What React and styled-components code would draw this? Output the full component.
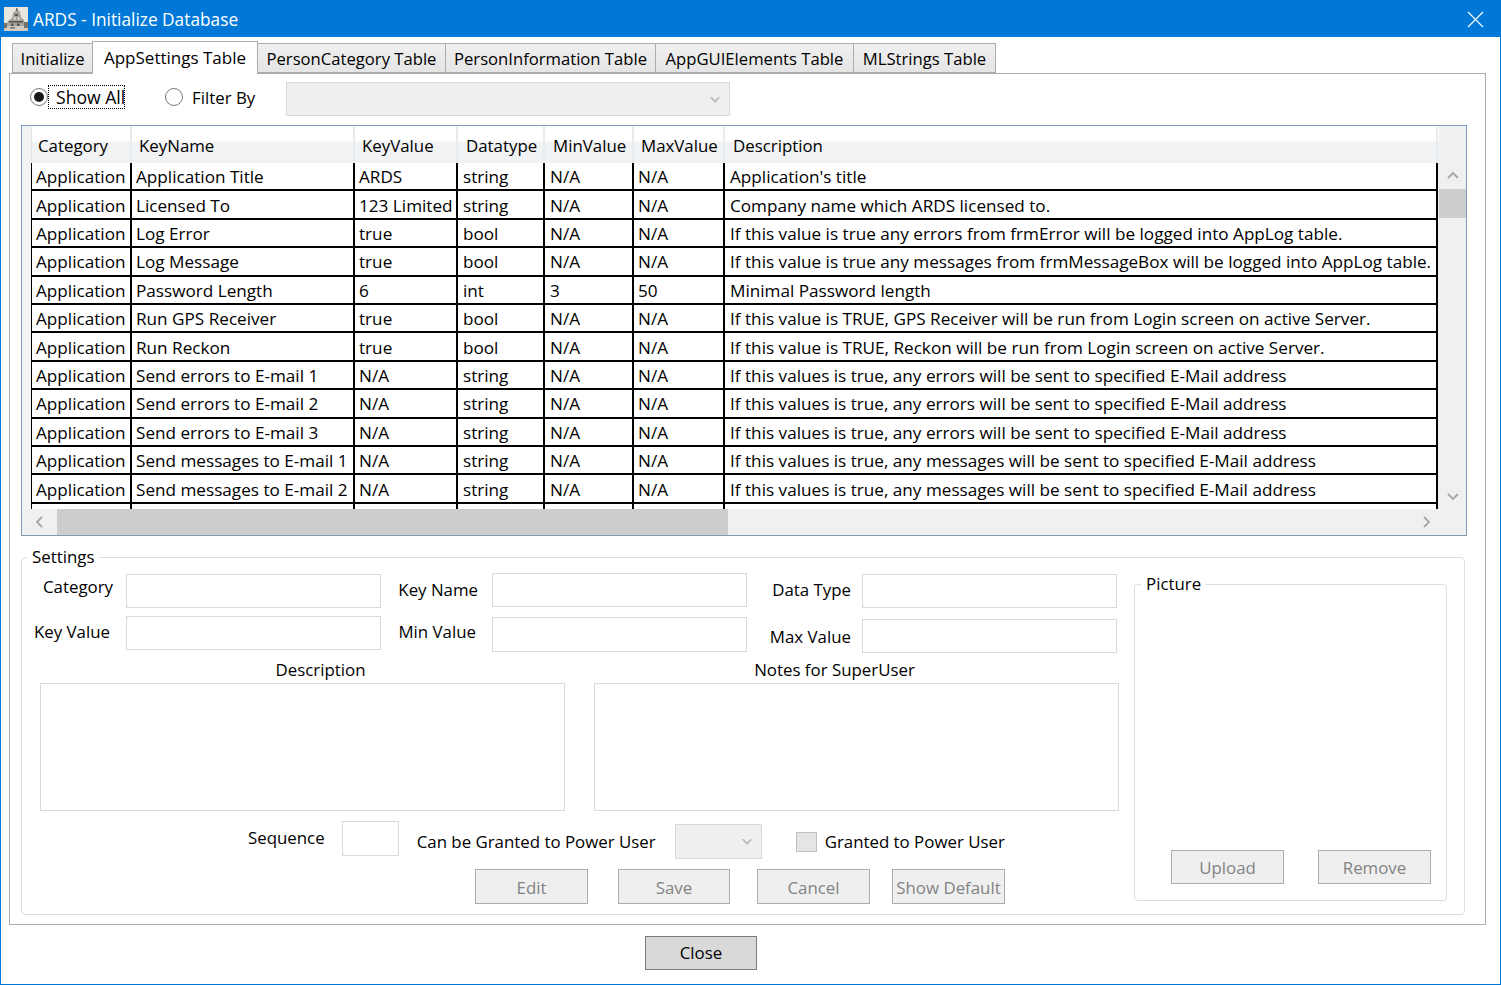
import React from 'react';
import styled, { createGlobalStyle } from 'styled-components';

const Global = createGlobalStyle`
  html, body { margin: 0; padding: 0; background: #fff; }
  body { font-family: "Open Sans", "Noto Sans", sans-serif; font-size: 16.85px; color: #000; }
  * { box-sizing: border-box; }
`;

const Win = styled.div`
  width: 1501px; height: 985px; display: flex; flex-direction: column;
  border: solid #0078d7; border-width: 1px; background: #fff; overflow: hidden;
`;
const TitleBar = styled.div`
  height: 37px; flex: none; margin: -1px -1px 0; background: #0078d7; color: #fff;
  display: flex; align-items: center; padding: 1px 17px 0 4px; gap: 5px; font-size: 17.3px;
`;
const TitleText = styled.span` flex: 1; padding-top: 1px; `;
const Body = styled.div` flex: 1; padding: 4px 14px 0 8px; display: flex; flex-direction: column; `;
const Tabs = styled.div` height: 32px; flex: none; display: flex; align-items: flex-end; padding-left: 3px; position: relative; z-index: 1; `;
const Tab = styled.div`
  height: ${p => p.$active ? 33 : 30}px; width: ${p => p.$w}px;
  margin-bottom: ${p => p.$active ? -1 : 0}px;
  background: ${p => p.$active ? '#fff' : 'linear-gradient(#f0f0f0,#e5e5e5)'};
  border: 1px solid #acacac; border-bottom: ${p => p.$active ? 'none' : '1px solid #acacac'};
  margin-left: ${p => p.$first ? 0 : -1}px;
  display: flex; align-items: center; justify-content: center; white-space: nowrap;
  padding-bottom: ${p => p.$active ? 2 : 0}px;
  font-size: ${p => p.$active ? 17 : 16.65}px;
  z-index: ${p => p.$active ? 2 : 0};
`;
const Panel = styled.div`
  width: 1477px; height: 852px; flex: none; border: 1px solid #acacac; padding: 0 18px 0 11px;
  display: flex; flex-direction: column;
`;
const FilterRow = styled.div` height: 51px; flex: none; display: flex; align-items: flex-start; padding: 8px 0 0 9px; `;
const RadioItem = styled.div` display: flex; align-items: center; height: 30px; margin-right: ${p => p.$mr}px; `;
const RadioDot = styled.span`
  width: 18px; height: 18px; border-radius: 50%; border: 1.5px solid #7a7a7a; background: #fff;
  display: flex; align-items: center; justify-content: center; flex: none; margin-right: ${p => p.$gap}px;
  &::after { content: ''; width: 10px; height: 10px; border-radius: 50%; background: ${p => p.$on ? '#1a1a1a' : 'transparent'}; }
`;
const FocusLabel = styled.span`
  width: 77px; height: 24px; border: 1px dotted #000; overflow: hidden; white-space: nowrap;
  display: flex; align-items: center; padding-left: 7px; font-size: 17.6px;
`;
const Combo = styled.div`
  width: ${p => p.$w}px; height: ${p => p.$h || 35}px; background: #efefef; border: 1px solid #d9d9d9;
  display: flex; align-items: center; justify-content: flex-end; padding-right: 8px; color: #a0a0a0;
`;
const GridBox = styled.div`
  width: 1446px; height: 411px; flex: none; border: 1px solid #7f9db9; display: grid;
  grid-template-columns: 1417px 27px; grid-template-rows: 383px 26px; background: #f0f0f0;
`;
const GridMain = styled.div` overflow: hidden; background: #f2f2f2; `;
const cols = '100px 223px 103px 87px 89px 91px 713px';
const HeaderRow = styled.div`
  height: 37px; display: grid; grid-template-columns: 10px ${cols};
  background: linear-gradient(#fff 0, #fff 38%, #f1f2f3 46%, #f1f2f3 100%);
`;
const HeadCell = styled.div`
  display: flex; align-items: center; padding: 1px 0 0 ${p => p.$pl}px; white-space: nowrap;
  border-right: 2px solid #e9ecee;
`;
const RowHeadBlank = styled.div` background: #f3f3f3; border-right: 1px solid #e6e6e6; `;
const Row = styled.div`
  height: 28.42px; display: grid; grid-template-columns: 10px ${cols}; background: #f0f0f0; font-size: 17.15px;
`;
const Cell = styled.div`
  background: #fff; border-right: 2px solid #000; border-bottom: 2px solid #000;
  padding: 1px 0 0 ${p => p.$pl}px; margin-left: ${p => p.$first ? -1 : 0}px;
  display: flex; align-items: center; white-space: nowrap; overflow: hidden;
  ${p => p.$first ? 'border-left: 1px solid #000;' : ''}
`;
const VScroll = styled.div` background: #f0f0f0; display: flex; flex-direction: column; padding-top: 36px; `;
const ArrowBox = styled.div` height: ${p => p.$h}px; width: ${p => p.$w ? `${p.$w}px` : 'auto'}; display: flex; align-items: center; justify-content: center; flex: none; `;
const VTrack = styled.div` flex: 1; `;
const VThumb = styled.div` height: 29px; background: #cdcdcd; `;
const HScroll = styled.div` background: #f0f0f0; display: flex; align-items: center; `;
const HThumb = styled.div` width: 671px; height: 26px; background: #cdcdcd; `;
const HTrack = styled.div` flex: 1; `;
const Corner = styled.div` background: #f0f0f0; `;
const Settings = styled.fieldset`
  width: 1444px; height: 368px; margin: 11px 0 0; padding: 0 17px 0 0; border: 1px solid #d5dfe5; border-radius: 4px;
  display: flex; min-width: 0;
`;
const Legend = styled.legend` margin-left: 5px; padding: 0 5px; line-height: 20px; `;
const LeftCol = styled.div` width: 1112px; flex: none; display: flex; flex-direction: column; padding-top: 7px; `;
const FieldsRow = styled.div`
  display: grid; grid-template-columns: 104px 255px 111px 255px 115px 255px; height: ${p => p.$h}px; align-items: start;
`;
const FLabel = styled.div`
  text-align: right; padding-right: ${p => p.$pr}px; margin-top: ${p => p.$mt}px; white-space: nowrap; line-height: 20px;
`;
const Input = styled.div`
  height: ${p => p.$h || 34}px; width: ${p => p.$w || 255}px; border: 1px solid #d9d9d9; background: #fff; margin-top: ${p => p.$mt || 0}px; flex: none;
`;
const NotesRow = styled.div` display: flex; padding-left: 18px; gap: 29px; `;
const NoteCol = styled.div` width: 525px; flex: none; display: flex; flex-direction: column; align-items: center; `;
const NoteLabel = styled.div` line-height: 20px; height: 23px; margin-left: ${p => p.$ml || 0}px; margin-right: ${p => p.$mr || 0}px; `;
const NoteBox = styled.div` width: 525px; height: 128px; border: 1px solid #d9d9d9; `;
const SeqRow = styled.div` display: flex; align-items: center; height: 38px; margin-top: 10px; white-space: nowrap; padding-left: 226px; `;
const SeqLabel = styled.span` margin-right: ${p => p.$mr}px; margin-left: ${p => p.$ml || 0}px; margin-top: ${p => p.$mt || 0}px; `;
const SmallCombo = styled(Combo)` width: 87px; margin-right: 34px; margin-top: 2px; `;
const Check = styled.span` width: 21px; height: 20px; background: #e5e5e5; border: 1px solid #bfbfbf; margin-right: 8px; margin-top: 4px; flex: none; `;
const ActionRow = styled.div` display: flex; margin: 10px 0 0 453px; `;
const Btn = styled.div`
  width: ${p => p.$w || 113}px; height: ${p => p.$h || 35}px; margin-right: ${p => p.$mr || 0}px; flex: none;
  border: 1px solid #adadad; background: #efefef; color: #838383; padding-top: 1px;
  display: flex; align-items: center; justify-content: center; white-space: nowrap;
`;
const PictureGroup = styled.fieldset`
  width: 313px; height: 327px; margin: 7px 0 0 0; padding: 0; border: 1px solid #d5dfe5; border-radius: 4px;
  display: flex; min-width: 0; flex-direction: column; justify-content: flex-end;
`;
const PicLegend = styled.legend` margin-left: 6px; padding: 0 5px; line-height: 20px; `;
const PicButtons = styled.div` display: flex; padding: 0 0 16px 36px; gap: 34px; `;
const Footer = styled.div` flex: 1; display: flex; padding: 11px 0 0 636px; `;
const CloseBtn = styled.div`
  width: 112px; height: 34px; background: #d9d9d9; border: 1px solid #7a7a7a; color: #000;
  display: flex; align-items: center; justify-content: center; padding-bottom: 1px;
`;

const Chevron = ({ dir, size = 14, color = '#a6a6a6' }) => {
  const pts = { up: '2,9 7,4 12,9', down: '2,5 7,10 12,5', left: '9,2 4,7 9,12', right: '5,2 10,7 5,12' }[dir];
  return (
    <svg width={size} height={size} viewBox="0 0 14 14">
      <polyline points={pts} fill="none" stroke={color} strokeWidth="1.8" />
    </svg>
  );
};

const AppIcon = () => (
  <svg width="24" height="24" viewBox="0 0 24 24">
    <rect width="24" height="24" fill="#e9e7e1" />
    <path d="M13 2 L16 5 L17 10 L20 13 L21 19 L2 19 L4 14 L8 11 L9 6 Z" fill="#a8a49b" />
    <path d="M12 1h1.5v3H12z" fill="#6a6a66" />
    <path d="M0 19h24v5H0z" fill="#cfccc5" />
    <path d="M5 14h14v1.5H5zM7 16.5h2.5V19H7zM13 16.5h2.5V19H13zM11 7h3v2h-3z" fill="#55524b" />
    <path d="M0 16h3v5H0zM20 15h4v6h-4zM6 20h5v1.5H6z" fill="#77736a" />
    <path d="M10 10h1.5v3H10zM14 10h1.5v3H14z" fill="#ddd9d1" />
  </svg>
);

const heads = [['Category', 6], ['KeyName', 7], ['KeyValue', 7], ['Datatype', 8], ['MinValue', 8], ['MaxValue', 7], ['Description', 8]];
const cellPad = [4, 4, 4, 5, 5, 4, 5];
const A = 'Application';
const rows = [
  [A, 'Application Title', 'ARDS', 'string', 'N/A', 'N/A', "Application's title"],
  [A, 'Licensed To', '123 Limited', 'string', 'N/A', 'N/A', 'Company name which ARDS licensed to.'],
  [A, 'Log Error', 'true', 'bool', 'N/A', 'N/A', 'If this value is true any errors from frmError will be logged into AppLog table.'],
  [A, 'Log Message', 'true', 'bool', 'N/A', 'N/A', 'If this value is true any messages from frmMessageBox will be logged into AppLog table.'],
  [A, 'Password Length', '6', 'int', '3', '50', 'Minimal Password length'],
  [A, 'Run GPS Receiver', 'true', 'bool', 'N/A', 'N/A', 'If this value is TRUE, GPS Receiver will be run from Login screen on active Server.'],
  [A, 'Run Reckon', 'true', 'bool', 'N/A', 'N/A', 'If this value is TRUE, Reckon will be run from Login screen on active Server.'],
  [A, 'Send errors to E-mail 1', 'N/A', 'string', 'N/A', 'N/A', 'If this values is true, any errors will be sent to specified E-Mail address'],
  [A, 'Send errors to E-mail 2', 'N/A', 'string', 'N/A', 'N/A', 'If this values is true, any errors will be sent to specified E-Mail address'],
  [A, 'Send errors to E-mail 3', 'N/A', 'string', 'N/A', 'N/A', 'If this values is true, any errors will be sent to specified E-Mail address'],
  [A, 'Send messages to E-mail 1', 'N/A', 'string', 'N/A', 'N/A', 'If this values is true, any messages will be sent to specified E-Mail address'],
  [A, 'Send messages to E-mail 2', 'N/A', 'string', 'N/A', 'N/A', 'If this values is true, any messages will be sent to specified E-Mail address'],
  ['', '', '', '', '', '', ''],
];
const tabs = [['Initialize', 81], ['AppSettings Table', 166], ['PersonCategory Table', 189], ['PersonInformation Table', 211], ['AppGUIElements Table', 199], ['MLStrings Table', 143]];

export default function App() {
  return (
    <Win>
      <Global />
      <TitleBar>
        <AppIcon />
        <TitleText>ARDS - Initialize Database</TitleText>
        <svg width="17" height="17" viewBox="0 0 17 17"><path d="M1 1 L16 16 M16 1 L1 16" stroke="#fff" strokeWidth="1.2" /></svg>
      </TitleBar>
      <Body>
        <Tabs>
          {tabs.map(([t, w], i) => <Tab key={t} $w={w} $first={i === 0} $active={i === 1}>{t}</Tab>)}
        </Tabs>
        <Panel>
          <FilterRow>
            <RadioItem $mr={40}><RadioDot $on $gap={0} /><FocusLabel>Show All</FocusLabel></RadioItem>
            <RadioItem $mr={31}><RadioDot $gap={9} />Filter By</RadioItem>
            <Combo $w={444} $h={34}><Chevron dir="down" size={12} color="#b5b5b5" /></Combo>
          </FilterRow>
          <GridBox>
            <GridMain>
              <HeaderRow>
                <RowHeadBlank />
                {heads.map(([h, pl]) => <HeadCell key={h} $pl={pl}>{h}</HeadCell>)}
              </HeaderRow>
              {rows.map((r, i) => (
                <Row key={i}>
                  <RowHeadBlank />
                  {r.map((c, j) => <Cell key={j} $first={j === 0} $pl={cellPad[j]}>{c}</Cell>)}
                </Row>
              ))}
            </GridMain>
            <VScroll>
              <ArrowBox $h={27}><Chevron dir="up" /></ArrowBox>
              <VThumb />
              <VTrack />
              <ArrowBox $h={27}><Chevron dir="down" /></ArrowBox>
            </VScroll>
            <HScroll>
              <ArrowBox $h={26} $w={35}><Chevron dir="left" /></ArrowBox>
              <HThumb />
              <HTrack />
              <ArrowBox $h={26} $w={27}><Chevron dir="right" /></ArrowBox>
            </HScroll>
            <Corner />
          </GridBox>
          <Settings>
            <Legend>Settings</Legend>
            <LeftCol>
              <FieldsRow $h={42}>
                <FLabel $pr={13} $mt={3}>Category</FLabel><Input />
                <FLabel $pr={14} $mt={6}>Key Name</FLabel><Input $mt={-1} />
                <FLabel $pr={11} $mt={6}>Data Type</FLabel><Input />
              </FieldsRow>
              <FieldsRow $h={44}>
                <FLabel $pr={16} $mt={6}>Key Value</FLabel><Input />
                <FLabel $pr={16} $mt={6}>Min Value</FLabel><Input $mt={1} $h={35} />
                <FLabel $pr={11} $mt={11}>Max Value</FLabel><Input $mt={3} />
              </FieldsRow>
              <NotesRow>
                <NoteCol><NoteLabel $ml={36}>Description</NoteLabel><NoteBox /></NoteCol>
                <NoteCol><NoteLabel $mr={44}>Notes for SuperUser</NoteLabel><NoteBox /></NoteCol>
              </NotesRow>
              <SeqRow>
                <SeqLabel $mr={17} $mt={-6}>Sequence</SeqLabel>
                <Input $w={57} $h={35} $mt={-3} />
                <SeqLabel $mr={19} $ml={18} $mt={3}>Can be Granted to Power User</SeqLabel>
                <SmallCombo><Chevron dir="down" size={12} color="#b5b5b5" /></SmallCombo>
                <Check />
                <SeqLabel $mr={0} $mt={3}>Granted to Power User</SeqLabel>
              </SeqRow>
              <ActionRow>
                <Btn $mr={30}>Edit</Btn>
                <Btn $w={112} $mr={27}>Save</Btn>
                <Btn $mr={22}>Cancel</Btn>
                <Btn>Show Default</Btn>
              </ActionRow>
            </LeftCol>
            <PictureGroup>
              <PicLegend>Picture</PicLegend>
              <PicButtons>
                <Btn $h={34}>Upload</Btn>
                <Btn $h={34}>Remove</Btn>
              </PicButtons>
            </PictureGroup>
          </Settings>
        </Panel>
        <Footer><CloseBtn>Close</CloseBtn></Footer>
      </Body>
    </Win>
  );
}
